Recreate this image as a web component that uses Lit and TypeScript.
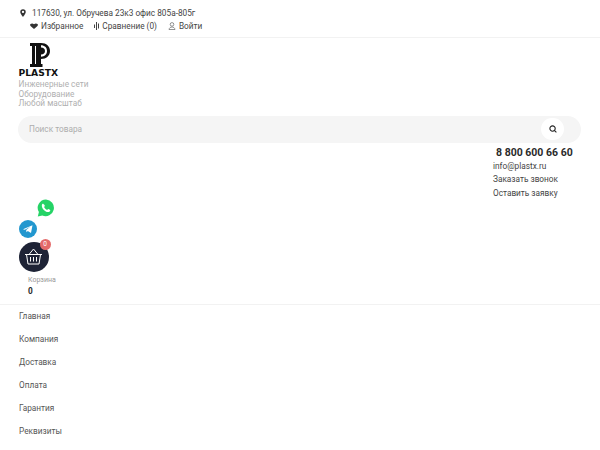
import { LitElement, html, css } from "lit";
import { customElement } from "lit/decorators.js";

@customElement("app-root")
export class AppRoot extends LitElement {
  static styles = css`
    :host { display: block; width: 600px; height: 450px; overflow: hidden; background: #fff; font-family: Roboto, "Liberation Sans", sans-serif; color: #444; font-size: 8.25px; }
    .top { height: 38px; box-sizing: border-box; border-bottom: 1px solid #f2f2f2; padding: 6px 0 0 18px; }
    .row { display: flex; align-items: center; height: 13px; }
    .addr { padding-left: 2px; gap: 6px; }
    .links { padding-left: 12px; gap: 11px; }
    .link { display: flex; align-items: center; gap: 3px; }
    .logo { padding: 5px 0 0 18.5px; display: flex; flex-direction: column; }
    .mark { margin-left: 11.5px; display: block; }
    .brand { font-family: "DejaVu Sans", "Liberation Sans", sans-serif; font-weight: 700; font-size: 9.2px; line-height: 12px; color: #111; }
    .tags { margin-top: 1px; }
    .tag { color: #b0b0b0; font-size: 8.25px; line-height: 9.5px; }
    .search { margin: 7px 19px 0 18px; height: 27px; border-radius: 14px; background: #f5f5f5; display: flex; align-items: center; justify-content: space-between; padding: 0 17px 0 11px; color: #adadad; }
    .sbtn { width: 23px; height: 22px; border-radius: 11px; background: #fff; display: flex; align-items: center; justify-content: center; }
    .contacts { margin: 3px 0 0 493px; height: 53px; display: flex; flex-direction: column; }
    .phone { font-size: 10.5px; font-weight: 700; line-height: 13px; margin-left: 3px; color: #2a2a2a; }
    .contact { line-height: 13.5px; color: #444; }
    .email { margin-top: 1px; }
    .social { display: flex; flex-direction: column; padding: 0 0 0 18.5px; height: 105px; box-sizing: border-box; }
    .wa { margin-left: 18px; display: block; }
    .tg { margin-top: 3px; display: block; }
    .basket-wrap { position: relative; width: 30px; height: 30px; margin-top: 4px; }
    .basket { width: 30px; height: 30px; border-radius: 50%; background: #1e2336; display: flex; align-items: center; justify-content: center; }
    .badge { position: absolute; left: 21px; top: -3px; width: 11px; height: 11px; border-radius: 50%; background: #e46a6a; color: #fff; font-size: 6.5px; display: flex; align-items: center; justify-content: center; }
    .clabel { color: #999; font-size: 7px; line-height: 10px; margin: 3px 0 0 9.5px; }
    .count { font-size: 8.25px; font-weight: 700; line-height: 12px; margin-left: 9.5px; color: #2a2a2a; }
    nav { border-top: 1px solid #f2f2f2; padding: 0 0 0 19px; display: flex; flex-direction: column; }
    nav a { display: block; height: 23px; line-height: 23px; color: #555; }
  `;

  render() {
    const items = ["Главная", "Компания", "Доставка", "Оплата", "Гарантия", "Реквизиты"];
    return html`
      <div class="top">
        <div class="row addr">
          <svg width="6" height="8" viewBox="0 0 7 9"><path fill="#333" fill-rule="evenodd" d="M3.5 0A3.2 3.2 0 0 0 .3 3.2C.3 5.3 3.5 9 3.5 9s3.2-3.7 3.2-5.8A3.2 3.2 0 0 0 3.5 0Zm0 4.6a1.3 1.3 0 1 1 0-2.7 1.3 1.3 0 0 1 0 2.7Z"/></svg>
          <span>117630, ул. Обручева 23к3 офис 805а-805г</span>
        </div>
        <div class="row links">
          <span class="link"><svg width="8" height="6" viewBox="0 0 8 7" preserveAspectRatio="none"><path fill="#333" d="M4 7 .8 3.8A2 2 0 0 1 .5 1.2C1.3.2 3 .2 4 1.4 5 .2 6.7.2 7.5 1.2A2 2 0 0 1 7.2 3.8Z"/></svg>Избранное</span>
          <span class="link"><svg width="5" height="8" viewBox="0 0 5 8"><path stroke="#444" d="M.5 2.5v3.5M2.500 0v8M4.500 1.500v5" fill="none"/></svg>Сравнение (0)</span>
          <span class="link"><svg width="8" height="8" viewBox="0 0 8 8"><path fill="none" stroke="#666" stroke-width=".7" d="M4 .6a1.800 1.800 0 1 1 0 3.600 1.800 1.800 0 0 1 0-3.600ZM1 7.500C1.300 5.800 2.500 5 4 5s2.700.8 3 2.500Z"/></svg>Войти</span>
        </div>
      </div>
      <div class="logo">
        <svg class="mark" width="20" height="24" viewBox="0 0 20 24">
          <path fill="#111" d="M0 0h11C16.500 0 20 3.300 20 8s-3.500 8-9 8v-2.300C14.700 13.500 17 11.500 17 8s-2.500-5.700-6-5.700V21h1.500v3H0v-3h2V3H0Z"/>
          <path fill="#111" d="M11 4.500C13.500 4.500 15 6 15 8s-1.500 3.500-4 3.500Z"/>
          <path fill="#fff" d="M5 3h1v18H5z"/>
        </svg>
        <div class="brand">PLASTX</div>
        <div class="tags">
          <div class="tag">Инженерные сети</div>
          <div class="tag">Оборудование</div>
          <div class="tag">Любой масштаб</div>
        </div>
      </div>
      <div class="search">
        <span>Поиск товара</span>
        <span class="sbtn"><svg width="8" height="8" viewBox="0 0 9 9"><circle cx="4" cy="4" r="3" fill="none" stroke="#222" stroke-width="1.200"/><path d="M6 6l2.300 2.300" stroke="#222" stroke-width="1.200"/></svg></span>
      </div>
      <div class="contacts">
        <div class="phone">8 800 600 66 60</div>
        <div class="contact email">info@plastx.ru</div>
        <div class="contact">Заказать звонок</div>
        <div class="contact">Оставить заявку</div>
      </div>
      <div class="social">
        <svg class="wa" width="18" height="18" viewBox="0 0 18 18">
          <path fill="#25d366" d="M9 .5a8.300 8.300 0 0 0-7.100 12.600L.8 17.500l4.500-1.100A8.300 8.300 0 1 0 9 .5Z"/>
          <path fill="#fff" d="M6.200 4.500c-.5 0-1.400.9-1.400 2.300 0 2.800 3.400 6.300 6.200 6.300 1.400 0 2.300-.9 2.300-1.600 0-.5-1.600-1.500-2.100-1.400-.4.1-.7.900-1.100.9-.9-.2-2.800-2-3-3 0-.4.700-.7.800-1.100 0-.5-1-1.900-1.700-1.900Z"/>
        </svg>
        <svg class="tg" width="18" height="18" viewBox="0 0 18 18">
          <circle cx="9" cy="9" r="9" fill="#2297cf"/>
          <path fill="#fff" d="M4 9.200 13.500 5.200 12 13 8.800 10.900 7.500 12.300 7.200 9.900 11.200 6.800 5.800 9.800Z"/>
        </svg>
        <div class="basket-wrap">
          <div class="basket">
            <svg width="19" height="17" viewBox="0 0 19 17" fill="none" stroke="#fff" stroke-width="1">
              <path d="M1 6.500h17M2.500 6.500 4 16h11l1.500-9.500M5 6.500 9.500 1l4.500 5.500M6.500 9v4.500M9.500 9v4.500M12.500 9v4.500"/>
            </svg>
          </div>
          <div class="badge">0</div>
        </div>
        <div class="clabel">Корзина</div>
        <div class="count">0</div>
      </div>
      <nav>${items.map((i) => html`<a>${i}</a>`)}</nav>
    `;
  }
}
